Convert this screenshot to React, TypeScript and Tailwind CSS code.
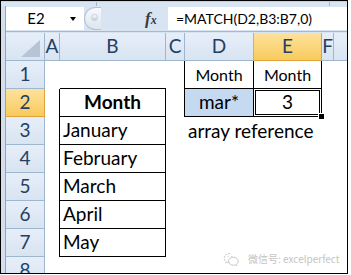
import React from 'react';

const cellFont = "font-['Lato','Liberation_Sans',sans-serif]";

function Cell({ w, className = '', children }: { w: string; className?: string; children?: React.ReactNode }) {
  return <div className={`${w} shrink-0 h-full flex items-center ${className}`}>{children}</div>;
}

function RowHead({ n, active = false }: { n: number; active?: boolean }) {
  return (
    <Cell
      w="w-[39px]"
      className={`justify-center border-r border-b text-[19px] text-[#233f61] ${
        active
          ? 'bg-linear-to-b from-[#fde29b] to-[#f8ca5b] border-r-[#e2a33f] border-b-[#e2a33f]'
          : 'bg-linear-to-b from-[#e6eef8] to-[#d9e4f2] border-[#9eb6ce]'
      }`}
    >
      {n}
    </Cell>
  );
}

function ColHead({ w, label, active = false }: { w: string; label?: string; active?: boolean }) {
  return (
    <Cell
      w={w}
      className={`justify-center border-r border-b text-[19px] text-[#233f61] ${
        active
          ? 'bg-linear-to-b from-[#fde29b] to-[#f8ca5b] border-r-[#e2a33f] border-b-[#e2a33f]'
          : 'bg-linear-to-b from-[#e6eef8] to-[#d9e4f2] border-[#9eb6ce]'
      }`}
    >
      {label}
    </Cell>
  );
}

function MonthRow({ n, label }: { n: number; label: string }) {
  return (
    <div className="h-[28px] flex bg-white">
      <RowHead n={n} />
      <Cell w="w-[15px]" className="border-r border-black" />
      <Cell w="w-[106px]" className="pl-[3px] border-r border-b border-black">{label}</Cell>
      <Cell w="w-[19px]" />
      <Cell w="w-[69px]" />
      <Cell w="w-[68px]" />
      <Cell w="w-[12px]" />
      <div className="flex-1" />
    </div>
  );
}

function WeChatMark() {
  return (
    <svg width="17" height="14" viewBox="0 0 17 14" fill="none" stroke="#c9c9c9" strokeWidth="1">
      <path d="M7 1.5C3.7 1.5 1.2 3.6 1.2 6.1c0 1.4.8 2.6 2 3.4l-.5 1.7 2-1c.7.2 1.5.3 2.3.3" strokeDasharray="2 1" />
      <path d="M10.5 5.2c-2.9 0-5.1 1.8-5.1 4s2.2 4 5.1 4c.6 0 1.2-.1 1.8-.3l1.6.9-.4-1.4c1-.7 1.7-1.8 1.7-3.1 0-2.3-2.2-4.1-4.7-4.1z" />
      <circle cx="5" cy="4.6" r=".6" fill="#c9c9c9" stroke="none" />
      <circle cx="8.8" cy="4.6" r=".6" fill="#c9c9c9" stroke="none" />
    </svg>
  );
}

export default function App() {
  return (
    <div className="w-[351px] h-[275px] bg-white">
      <div className={`relative w-[348px] h-[274px] border border-black bg-[#d9e4f2] flex flex-col overflow-hidden ${cellFont}`}>
        {/* ribbon edge */}
        <div className="h-[5px] flex shrink-0 border-t border-[#c3d1e3]">
          <div className="w-[96px] border-r border-[#a9b9cd]" />
          <div className="w-[233px] border-r border-[#a9b9cd]" />
          <div className="flex-1" />
        </div>

        <div className="flex flex-1 min-h-0">
          <div className="w-[4px] shrink-0 bg-[#d4dfed]" />
          <div className="flex-1 flex flex-col border-l border-[#8fa5c0] min-w-0">
            {/* formula bar */}
            <div className="h-[26px] shrink-0 flex pt-px border-b border-[#a7b9cf]">
              <div className="w-[78px] h-[23px] bg-white flex items-center">
                <span className="w-[60px] text-center text-[15px] text-black">E2</span>
                <span className="ml-[4px] w-0 h-0 border-l-[3px] border-r-[3px] border-t-[4px] border-l-transparent border-r-transparent border-t-black" />
              </div>
              <div className="w-[17px] h-[23px] rounded-l-full border border-r-0 border-[#b5c3d4] bg-linear-to-b from-[#f7f9fc] to-[#dde5ef] flex items-start pl-[6px] pt-[6px]">
                <span className="w-[7px] h-[7px] rounded-full bg-linear-to-b from-[#ffffff] to-[#c3cdd9] border border-[#c4cfdc]" />
              </div>
              <div className="w-[44px]" />
              <div className="w-[23px] h-[23px] flex items-center font-['Liberation_Serif',serif] italic font-bold text-[#3c3c3c] text-[17px] leading-none">
                f<span className="text-[12px] mt-[3px]">x</span>
              </div>
              <div className="flex-1 h-[23px] bg-white flex items-center pl-[8px] text-[14px] text-black whitespace-nowrap">
                =MATCH(D2,B3:B7,0)
              </div>
            </div>
            <div className="h-px shrink-0" />

            {/* column headers */}
            <div className="h-[28px] shrink-0 flex">
              <div className="w-[39px] shrink-0 h-full border-r border-b border-[#9eb6ce] bg-linear-to-b from-[#e6eef8] to-[#d9e4f2] flex items-end justify-end pr-[4px] pb-[3px]">
                <svg width="19" height="17" viewBox="0 0 19 17">
                  <polygon points="19,0 19,17 0,17" fill="#b6c4d6" />
                </svg>
              </div>
              <ColHead w="w-[15px]" label="A" />
              <ColHead w="w-[106px]" label="B" />
              <ColHead w="w-[19px]" label="C" />
              <ColHead w="w-[69px]" label="D" />
              <ColHead w="w-[68px]" label="E" active />
              <ColHead w="w-[12px]" label="F" />
              <div className="flex-1 border-b border-[#9eb6ce] bg-linear-to-b from-[#e6eef8] to-[#d9e4f2]" />
            </div>

            {/* row 1 */}
            <div className="h-[28px] shrink-0 flex bg-white text-[19px] text-black">
              <RowHead n={1} />
              <Cell w="w-[15px]" />
              <Cell w="w-[106px]" className="border-b border-black" />
              <Cell w="w-[19px]" className="border-r border-black" />
              <Cell w="w-[69px]" className="justify-center border-r border-b border-black text-[16px]">Month</Cell>
              <Cell w="w-[68px]" className="justify-center border-r border-b border-black text-[16px]">Month</Cell>
              <Cell w="w-[12px]" />
              <div className="flex-1" />
            </div>

            {/* row 2 */}
            <div className="h-[28px] shrink-0 flex bg-white text-[19px] text-black">
              <RowHead n={2} active />
              <Cell w="w-[15px]" className="border-r border-black" />
              <Cell w="w-[106px]" className="justify-center font-bold border-r border-b border-black">Month</Cell>
              <Cell w="w-[19px]" className="border-r border-black" />
              <Cell w="w-[69px]" className="justify-center bg-[#c5d9f1] border-r border-b border-black">mar*</Cell>
              <Cell w="w-[68px]" className="relative justify-center border-r border-b border-black">
                3
                <div className="absolute -left-px -top-px -right-px -bottom-px border border-black">
                  <div className="absolute inset-px border border-black" />
                </div>
                <div className="absolute -right-[3px] -bottom-[3px] w-[5px] h-[5px] bg-black outline outline-1 outline-white" />
              </Cell>
              <Cell w="w-[12px]" />
              <div className="flex-1" />
            </div>

            {/* row 3 */}
            <div className="h-[28px] shrink-0 flex bg-white text-[19px] text-black">
              <RowHead n={3} />
              <Cell w="w-[15px]" className="border-r border-black" />
              <Cell w="w-[106px]" className="pl-[3px] border-r border-b border-black">January</Cell>
              <Cell w="w-[19px]" />
              <Cell w="w-[69px]" className="pl-[3px] whitespace-nowrap overflow-visible">array reference</Cell>
              <Cell w="w-[68px]" />
              <Cell w="w-[12px]" />
              <div className="flex-1" />
            </div>

            <div className="text-[19px] text-black">
              <MonthRow n={4} label="February" />
              <MonthRow n={5} label="March" />
              <MonthRow n={6} label="April" />
              <MonthRow n={7} label="May" />
              <div className="h-[28px] flex bg-white">
                <RowHead n={8} />
                <div className="flex-1" />
              </div>
            </div>
          </div>
        </div>

        {/* watermark */}
        <div className="absolute left-[222px] top-[251px] flex items-center gap-[8px] whitespace-nowrap text-[10px] text-[#c4c4c4] font-['Noto_Sans_CJK_SC',sans-serif] leading-none">
          <WeChatMark />
          <span className="whitespace-nowrap">微信号: excelperfect</span>
        </div>
      </div>
    </div>
  );
}
